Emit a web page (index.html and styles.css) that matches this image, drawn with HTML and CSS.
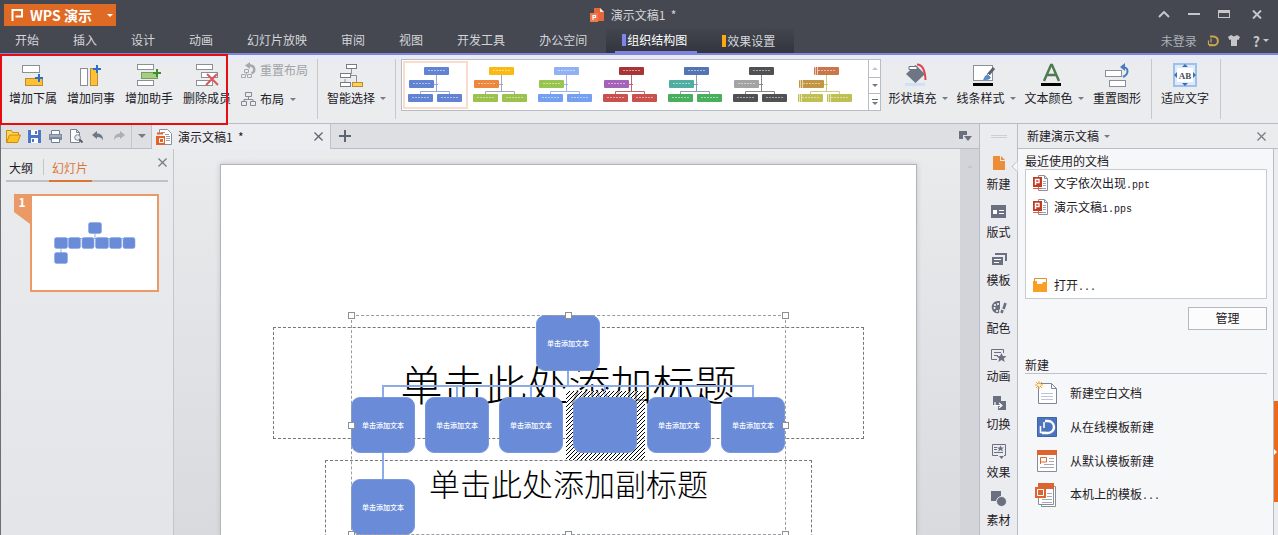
FILE: index.html
```html
<!DOCTYPE html>
<html lang="zh-CN">
<head>
<meta charset="utf-8">
<title>演示文稿1 - WPS 演示</title>
<link rel="stylesheet" href="styles.css">
</head>
<body>
<svg class="defs" aria-hidden="true">
  <symbol id="chart" viewBox="0 0 61 44">
    <path d="M31.500 12v17M29 21.500h4M15.500 31v-2.500h29V31" fill="none" stroke="var(--line)"/>
    <g stroke="none">
      <rect x="19" y="4" width="25" height="8" rx="1" fill="var(--a)"/>
      <rect x="4" y="17" width="25" height="8" rx="1" fill="var(--b)"/>
      <rect x="3" y="31" width="25" height="8" rx="1" fill="var(--c)"/>
      <rect x="32" y="31" width="25" height="8" rx="1" fill="var(--c)"/>
    </g>
    <path d="M23 7.500h17M8 20.500h17M7 34.500h17M36 34.500h17" stroke="#fff" stroke-opacity=".5" stroke-dasharray="2 1"/>
  </symbol>
  <symbol id="close" viewBox="0 0 10 10"><path d="M.5.5l9 9M9.500.5l-9 9" fill="none" stroke="currentColor" stroke-width="1.400"/></symbol>
  <symbol id="ppt" viewBox="0 0 17 16">
    <path d="M6.500.5h6l3 3v12h-9z" fill="#fff" stroke="#8a909c"/><path d="M12.500.5v3h3" fill="none" stroke="#8a909c"/>
    <path d="M11 6.500h3M11 8.500h3M11 10.500h3M9 13.500h5" stroke="#9aa3b5"/>
    <path d="M1 2h9v10H1z" fill="#c43a22"/><path d="M3.500 10V4.500h3.500v3H3.500" fill="none" stroke="#fff" stroke-width="1.400"/><path d="M1 13.500h9" stroke="#d8644c"/>
  </symbol>
</svg>

<header class="header">
  <div class="titlebar">
    <button class="app-button" type="button">
      <svg width="12" height="12" viewBox="0 0 12 12"><path d="M1.500 12V1H11v6.500H4.500" fill="none" stroke="#fff" stroke-width="2"/></svg>
      <span>WPS 演示</span><i class="arrow"></i>
    </button>
    <h1 class="doc-title">
      <svg width="15" height="14" viewBox="0 0 15 14"><path d="M4 0h6l4 4v9H4z" fill="#e8663c"/><path d="M10 0v4h4z" fill="#fbe3d8"/><path d="M0 5h8v9H0z" fill="#f0794d"/><path d="M3 12V7.500h2.500v2H3" fill="none" stroke="#fff" stroke-width="1.200"/></svg>
      演示文稿1&nbsp; *
    </h1>
    <div class="window-buttons">
      <button type="button" aria-label="收起"><svg width="12" height="7" viewBox="0 0 12 7"><path d="M1 6l5-5 5 5" fill="none" stroke="#c4c6ca" stroke-width="2"/></svg></button>
      <button type="button" aria-label="最小化"><svg width="12" height="7" viewBox="0 0 12 7"><path d="M0 3h12" stroke="#c4c6ca" stroke-width="2"/></svg></button>
      <button type="button" aria-label="最大化"><svg width="12" height="8" viewBox="0 0 12 8"><path d="M0 0h12v8H0zM1 3v4h10V3z" fill="#c4c6ca" fill-rule="evenodd"/></svg></button>
      <button type="button" aria-label="关闭"><svg width="10" height="9" viewBox="0 0 10 9"><path d="M1 .5l8 8M9 .5l-8 8" stroke="#c4c6ca" stroke-width="2"/></svg></button>
    </div>
  </div>
  <div class="menu-row">
    <nav class="tabs">
      <a href="#">开始</a><a href="#">插入</a><a href="#">设计</a><a href="#">动画</a><a href="#">幻灯片放映</a><a href="#">审阅</a><a href="#">视图</a><a href="#">开发工具</a><a href="#">办公空间</a>
    </nav>
    <nav class="context-tabs">
      <a class="active" href="#">组织结构图</a><a class="effects" href="#">效果设置</a>
    </nav>
    <div class="account">
      <a href="#">未登录</a>
      <svg width="12" height="12" viewBox="0 0 12 12"><path d="M3 1.500h3.500a4.300 4.300 0 0 1 0 8.800H2" fill="none" stroke="#c9a54f" stroke-width="2"/><path d="M4 3.500v4M1.500 5.500v4h4" fill="none" stroke="#c9a54f" stroke-width="1.200"/></svg>
      <svg width="12" height="11" viewBox="0 0 12 11"><path d="M3 0l3 1.500L9 0l3 2-1.500 3L9 4.500V11H3V4.500L1.500 5 0 2z" fill="#c4c6ca"/></svg>
      <button type="button" class="help">?<i class="arrow"></i></button>
    </div>
  </div>
</header>

<section class="ribbon">
  <div class="group members">
    <button type="button" class="tool"><svg width="26" height="26" viewBox="0 0 26 26"><rect x="2.500" y="3.500" width="17" height="7" fill="#fff" stroke="#8b8f96"/><rect x="5.500" y="16.500" width="17" height="7" fill="#ffc035" stroke="#b98c35"/><path d="M19 12v8M15 16h8" stroke="#2b6fc9" stroke-width="2"/></svg>增加下属</button>
    <button type="button" class="tool"><svg width="26" height="26" viewBox="0 0 26 26"><rect x="2.500" y="6.500" width="7" height="17" fill="#fff" stroke="#8b8f96"/><rect x="12.500" y="6.500" width="7" height="17" fill="#ffc035" stroke="#b98c35"/><path d="M19 3v8M15 7h8" stroke="#2b6fc9" stroke-width="2"/></svg>增加同事</button>
    <button type="button" class="tool"><svg width="26" height="26" viewBox="0 0 26 26"><rect x="1.500" y="2.500" width="16" height="5" fill="#fff" stroke="#8b8f96"/><rect x="5.500" y="10.500" width="16" height="6" fill="#a4d07d" stroke="#7c9a68"/><rect x="1.500" y="18.500" width="16" height="5" fill="#fff" stroke="#8b8f96"/><path d="M21 7v8M17 11h8" stroke="#3f8c2c" stroke-width="2"/></svg>增加助手</button>
    <button type="button" class="tool"><svg width="26" height="26" viewBox="0 0 26 26"><rect x="2.500" y="2.500" width="16" height="5" fill="#fff" stroke="#8b8f96"/><rect x="7.500" y="10.500" width="16" height="5" fill="#fff" stroke="#8b8f96"/><rect x="2.500" y="18.500" width="16" height="5" fill="#fff" stroke="#8b8f96"/><path d="M13 12l11 11M23 12L12 23" stroke="#dc5858" stroke-width="2"/></svg>删除成员</button>
  </div>
  <div class="group layout-tools">
    <button type="button" disabled><svg width="16" height="16" viewBox="0 0 16 16"><path d="M7 3.500h2.500a4 4 0 0 1 1 7.800" fill="none" stroke="#a6a8ad" stroke-width="2.400"/><path d="M4 3.500L9 0v7z" fill="#a6a8ad"/><path d="M3.500 7.500h4v3h-4zM.5 12.500h4v3h-4zM6.500 12.500h4v3h-4zM5.500 10.500v2" fill="#eee" stroke="#a6a8ad"/></svg>重置布局</button>
    <button type="button"><svg width="16" height="14" viewBox="0 0 16 14"><path d="M4.500.5h6v4h-6zM.5 9.500h5v4h-5zM9.500 9.500h5v4h-5zM7.500 4.500v3M3 9.500v-2h9v2" fill="none" stroke="#858991"/></svg>布局<i class="arrow"></i></button>
  </div>
  <div class="group smart">
    <button type="button" class="tool"><svg width="26" height="26" viewBox="0 0 26 26"><path d="M13.500 6v6M7 17v3M11 13.500h7.500V20" fill="none" stroke="#8b8f96"/><rect x="8.500" y="2.500" width="10" height="4" fill="#fff" stroke="#777b83"/><rect x="2.500" y="11.500" width="10" height="4" fill="#fff" stroke="#777b83"/><rect x="2.500" y="20.500" width="10" height="4" fill="#fff" stroke="#777b83"/><rect x="14.500" y="20.500" width="10" height="4" fill="#ffd05a" stroke="#b98c35"/></svg><span>智能选择<i class="arrow"></i></span></button>
  </div>
  <div class="gallery">
    <button type="button" class="style blue selected" aria-label="样式 1"><svg><use href="#chart"/></svg></button>
    <button type="button" class="style orange" aria-label="样式 2"><svg><use href="#chart"/></svg></button>
    <button type="button" class="style sky" aria-label="样式 3"><svg><use href="#chart"/></svg></button>
    <button type="button" class="style red" aria-label="样式 4"><svg><use href="#chart"/></svg></button>
    <button type="button" class="style teal" aria-label="样式 5"><svg><use href="#chart"/></svg></button>
    <button type="button" class="style dark" aria-label="样式 6"><svg><use href="#chart"/></svg></button>
    <button type="button" class="style olive" aria-label="样式 7"><svg viewBox="0 0 61 44"><use href="#chart"/><path d="M20.500 4v8M22.500 4v8M5.500 17v8M7.500 17v8M4.500 31v8M6.500 31v8M33.500 31v8M35.500 31v8" stroke="#fff" stroke-opacity=".6"/></svg></button>
    <div class="gallery-scroll">
      <button type="button" aria-label="上一行"><i class="arrow up"></i></button>
      <button type="button" aria-label="下一行"><i class="arrow"></i></button>
      <button type="button" class="more" aria-label="更多"><i class="arrow"></i></button>
    </div>
  </div>
  <div class="group format">
    <button type="button" class="tool"><svg width="26" height="26" viewBox="0 0 26 26"><path d="M3 12l9.500-9L22 12l-9.500 9z" fill="#6f7683"/><path d="M6 4.500h8v3H6z" fill="#fff" stroke="#687080"/><path d="M14 2.500c5 0 8 4 8.500 15.500" fill="none" stroke="#e2434f" stroke-width="2"/><path d="M2 22.500h20" stroke="#cfe0f7" stroke-width="3"/></svg><span>形状填充<i class="arrow"></i></span></button>
    <button type="button" class="tool"><svg width="26" height="26" viewBox="0 0 26 26"><rect x="2.500" y="3.500" width="19" height="15" fill="#fff" stroke="#8b8f96"/><path d="M23 6l-6 7" stroke="#596273" stroke-width="3"/><path d="M12 18l2-4 3-2 3 3c-1 3-4 3-8 3z" fill="#5c8bcb"/><path d="M17 12l3 3" stroke="#fff"/><path d="M2 22.500h20" stroke="#000" stroke-width="3"/></svg><span>线条样式<i class="arrow"></i></span></button>
    <button type="button" class="tool"><svg width="26" height="26" viewBox="0 0 26 26"><path d="M5 19L12 3h1l7 16M7.500 13h10" fill="none" stroke="#4f7a50" stroke-width="2.400"/><path d="M2 22.500h20" stroke="#000" stroke-width="3"/></svg><span>文本颜色<i class="arrow"></i></span></button>
    <button type="button" class="tool reset"><svg width="26" height="26" viewBox="0 0 26 26"><rect x="1.500" y="8.500" width="16" height="6" fill="#fff" stroke="#8b8f96"/><rect x="5.500" y="18.500" width="16" height="6" fill="#fff" stroke="#8b8f96"/><path d="M19 15c6-3 6-9 0-10" fill="none" stroke="#4a7dbd" stroke-width="2"/><path d="M16 5l5-4v8z" fill="#4a7dbd"/></svg>重置图形</button>
  </div>
  <div class="group fit">
    <button type="button" class="tool"><svg width="26" height="26" viewBox="0 0 26 26"><rect x="2" y="2" width="22" height="22" fill="#dfeafa" stroke="#9dc0ee" stroke-width="2"/><rect x="5" y="6" width="16" height="14" fill="#fff"/><path d="M10 5l3-3 3 3zM10 21l3 3 3-3zM5 10l-3 3 3 3zM21 10l3 3-3 3z" fill="#3c6fb4"/><text class="ab" x="13" y="17" text-anchor="middle">AB</text></svg>适应文字</button>
  </div>
  <div class="highlight"></div>
</section>

<div class="workspace">
  <main class="editor">
    <div class="docbar">
      <div class="quick">
        <button type="button" aria-label="打开"><svg width="15" height="13" viewBox="0 0 15 13"><path d="M.5 12V.5h5l1 2h6V5" fill="#ffd65c" stroke="#c98a12"/><path d="M.5 12.500L3.500 5h11l-3 7.500z" fill="#ffc21f" stroke="#c98a12"/></svg></button>
        <button type="button" aria-label="保存"><svg width="13" height="13" viewBox="0 0 13 13"><path d="M0 0h13v13H0z" fill="#4f77c7"/><path d="M3 0h7v5H3zM3 8h7v5H3z" fill="#fff"/><path d="M7 1h2v3H7zM4 9h2v3H4z" fill="#4f77c7"/></svg></button>
        <button type="button" aria-label="打印"><svg width="13" height="13" viewBox="0 0 13 13"><path d="M2.500.5h8v4h-8z" fill="#fff" stroke="#6e7c92"/><path d="M0 4h13v6H0z" fill="#7e8ca3"/><path d="M1 6h11" stroke="#c5ccd8"/><path d="M2.500 8.500h8v4h-8z" fill="#fff" stroke="#6e7c92"/></svg></button>
        <button type="button" aria-label="打印预览"><svg width="13" height="14" viewBox="0 0 13 14"><path d="M.5.5h6l3 3v10h-9zM6.500.5v3h3" fill="#fff" stroke="#7b828e"/><circle cx="7.500" cy="8.500" r="2.800" fill="#e4eaf2" stroke="#7b828e"/><path d="M9.500 10.500l3 3" stroke="#59606d" stroke-width="2"/></svg></button>
        <button type="button" aria-label="撤销"><svg width="12" height="10" viewBox="0 0 12 10"><path d="M0 4l5-4v2.500c4 0 6 2 6 7-1-3-3-3.500-6-3.500V8z" fill="#6d7787"/></svg></button>
        <button type="button" aria-label="恢复"><svg width="12" height="10" viewBox="0 0 12 10"><path d="M12 4L7 0v2.500c-4 0-6 2-6 7 1-3 3-3.500 6-3.500V8z" fill="#abafb6"/></svg></button>
      </div>
      <button type="button" class="quick-more" aria-label="自定义"><i class="arrow big"></i></button>
      <div class="doc-tab">
        <svg width="16" height="16" viewBox="0 0 16 16"><path d="M3.500 4V.5h8l4 4v11h-9" fill="#fff" stroke="#8a909c"/><path d="M9 5.500h4M10 7.500h4M10 9.500h4M10 11.500h4M5 3.500h4" stroke="#9aa0aa"/><path d="M0 7h9v9H0z" fill="#e1642a"/><path d="M3.500 9.500h4v4h-4z" fill="none" stroke="#fff"/><path d="M1 4.500h6" stroke="#e1642a" stroke-width="2"/></svg>
        <span>演示文稿1&nbsp; *</span>
        <button type="button" aria-label="关闭标签"><svg width="9" height="9"><use href="#close"/></svg></button>
      </div>
      <button type="button" class="add" aria-label="新建标签"><svg width="12" height="12" viewBox="0 0 12 12"><path d="M6 0v12M0 6h12" stroke="#5d6474" stroke-width="2"/></svg></button>
      <button type="button" class="windows" aria-label="窗口列表"><svg width="13" height="10" viewBox="0 0 13 10"><path d="M0 0h8v4H4v4H0z" fill="#6b7080"/><path d="M5 5h8l-4 5z" fill="#6b7080"/></svg></button>
    </div>

    <div class="stage">
      <aside class="outline">
        <div class="outline-tabs">
          <button type="button">大纲</button><i class="divider"></i><button type="button" class="active">幻灯片</button>
          <button type="button" class="close" aria-label="关闭窗格"><svg width="9" height="9"><use href="#close"/></svg></button>
        </div>
        <div class="thumb-row">
          <span class="number">1</span>
          <div class="thumb">
            <svg viewBox="0 0 125 94"><path d="M63 36v7M29 46v-3.500h68V46M29 53v5" fill="none" stroke="#8fb0ea"/><g fill="#6a8bd8" stroke="#88a7e6" stroke-width=".6"><rect x="56.500" y="26.500" width="13" height="11" rx="2"/><rect x="22.500" y="41.500" width="13" height="11" rx="2"/><rect x="36.500" y="41.500" width="12" height="11" rx="2"/><rect x="50" y="41.500" width="12" height="11" rx="2"/><rect x="63.500" y="41.500" width="13" height="11" rx="2"/><rect x="77.500" y="41.500" width="12" height="11" rx="2"/><rect x="91" y="41.500" width="12" height="11" rx="2"/><rect x="22.500" y="56.500" width="13" height="11" rx="2"/></g></svg>
          </div>
        </div>
      </aside>
      <div class="canvas">
        <div class="slide">
          <div class="placeholder title">单击此处添加标题</div>
          <div class="placeholder subtitle">单击此处添加副标题</div>
          <div class="org">
            <svg class="links" width="435" height="220" viewBox="0 0 435 220"><path d="M217 55v16M32 82V71h370v11M106 71v11M180 71v11M254 71v11M328 71v11M32 138v26" fill="none" stroke="#8cabe9" stroke-width="2"/></svg>
            <svg class="hatch" width="79" height="69"><defs><pattern id="stripes" width="4" height="4" patternUnits="userSpaceOnUse"><path d="M0 0h4v4H0z" fill="#fff" fill-opacity=".6"/><path d="M-1 1l2-2M0 4l4-4M3 5l2-2" stroke="#000" stroke-width="1"/></pattern></defs><path d="M0 0h79v69H0z" fill="url(#stripes)"/></svg>
            <div class="node root">单击添加文本</div>
            <div class="node c1">单击添加文本</div>
            <div class="node c2">单击添加文本</div>
            <div class="node c3">单击添加文本</div>
            <div class="node c4"></div>
            <div class="node c5">单击添加文本</div>
            <div class="node c6">单击添加文本</div>
            <div class="node leaf">单击添加文本</div>
            <div class="frame"></div>
            <i class="handle nw"></i><i class="handle n"></i><i class="handle ne"></i><i class="handle w"></i><i class="handle e"></i><i class="handle sw"></i><i class="handle s"></i><i class="handle se"></i>
          </div>
        </div>
        <div class="scrollbar"><i class="arrow up"></i></div>
      </div>
    </div>
  </main>

  <nav class="rail">
    <i class="grip"></i>
    <button type="button" class="current"><svg width="16" height="16" viewBox="0 0 16 16"><path d="M2 1h7v5h5v9H2z" fill="#ee8d37"/><path d="M10 1l4 4h-4z" fill="#ee8d37"/></svg>新建</button>
    <button type="button"><svg width="16" height="16" viewBox="0 0 16 16"><path d="M0 2h15v13H0z" fill="#6b7080"/><path d="M2 7h4v4H2zM8 7h5v1H8zM8 10h5v1H8z" fill="#fff"/></svg>版式</button>
    <button type="button"><svg width="16" height="16" viewBox="0 0 16 16"><path d="M4 3h11v7" fill="none" stroke="#6b7080" stroke-width="2"/><path d="M1 6h11v8H1z" fill="#6b7080"/><path d="M3 8.500h7M3 11.500h5" stroke="#fff"/></svg>模板</button>
    <button type="button"><svg width="16" height="16" viewBox="0 0 16 16"><path d="M6 2C2 3 0 6 1 10c1 4 5 5 7 4 1-1-1-3 1-4V2z" fill="#6b7080"/><g fill="#fff"><circle cx="4" cy="6" r="1"/><circle cx="7" cy="5" r="1"/><circle cx="3.500" cy="9" r="1"/><circle cx="6" cy="12" r="1"/></g><path d="M14.500 4l-2 6M11.500 11l-1 3" stroke="#6b7080" stroke-width="2.600"/></svg>配色</button>
    <button type="button"><svg width="16" height="16" viewBox="0 0 16 16"><path d="M6 12.500H.5v-10h12V6" fill="none" stroke="#6b7080"/><path d="M3 5.500h7M3 8.500h4" stroke="#6b7080"/><path d="M10.500 6l1.400 3 3.600.2-2.700 2.300 1 3.500-3.300-2-3.200 2 .9-3.500L5.500 9.200 9 9z" fill="#6b7080"/></svg>动画</button>
    <button type="button"><svg width="16" height="16" viewBox="0 0 16 16"><path d="M2 1h8v9H2zM7 6h8v9H7z" fill="#6b7080"/><path d="M4 7v3.500h6M8 8l3 2.500L8 13" fill="none" stroke="#fff" stroke-width="1.200"/></svg>切换</button>
    <button type="button"><svg width="16" height="16" viewBox="0 0 16 16"><path d="M7 12.500H1.500v-11h13v11H13" fill="none" stroke="#6b7080"/><path d="M3 4.500h3M3 6.500h3M3 9.500h9" stroke="#6b7080"/><path d="M9.500 2.500l1 2h2.500l-2 1.500 1 2.500-2.500-1.500L7 8.500 8 6 6 4.500h2.500zM8 13h5l-2.500 3z" fill="#6b7080"/></svg>效果</button>
    <button type="button"><svg width="16" height="16" viewBox="0 0 16 16"><path d="M0 0h10v10H0z" fill="#6b7080"/><circle cx="10.500" cy="10.500" r="5" fill="#6b7080" stroke="#ecedf0"/></svg>素材</button>
  </nav>

  <aside class="pane">
    <div class="pane-head"><button type="button">新建演示文稿<i class="arrow"></i></button><button type="button" class="close" aria-label="关闭"><svg width="9" height="9"><use href="#close"/></svg></button></div>
    <div class="pane-row">
      <div class="pane-body">
        <h2>最近使用的文档</h2>
        <div class="recent">
          <a href="#"><svg width="17" height="16"><use href="#ppt"/></svg><span>文字依次出现<b>.ppt</b></span></a>
          <a href="#"><svg width="17" height="16"><use href="#ppt"/></svg><span>演示文稿<b>1.pps</b></span></a>
          <a class="open" href="#"><svg width="17" height="16" viewBox="0 0 17 16"><path d="M2.500 7V1.500h12V7" fill="#fff" stroke="#e09024"/><path d="M1 4h4v3h5l1-2h4v10H1z" fill="#f99f26"/></svg><span>打开<b>...</b></span></a>
        </div>
        <button type="button" class="manage">管理</button>
        <h2 class="new">新建</h2>
        <ul class="new-list">
          <li><a href="#"><svg width="24" height="24" viewBox="0 0 24 24"><path d="M3.500 2.500h13l5 5v15h-18zM16.500 2.500v5h5" fill="#fff" stroke="#7c869a"/><path d="M6 12.500h12M6 15.500h12M6 18.500h12" stroke="#bcc5d8"/><path d="M4 0v8M0 4h8M1 1l6 6M7 1L1 7" stroke="#f2a12d"/><circle cx="4" cy="4" r="1.500" fill="#fff4c8"/></svg><span>新建空白文档</span></a></li>
          <li><a href="#"><svg width="24" height="24" viewBox="0 0 24 24"><path d="M2.500 2.500h19v19h-19z" fill="#4c73bd" stroke="#3f64ab"/><path d="M10 6h3a5.500 5.500 0 0 1 0 12H7" fill="none" stroke="#fff" stroke-width="2.400"/><path d="M9 7v6M5.500 11v6.500H11" fill="none" stroke="#fff" stroke-width="1.600"/></svg><span>从在线模板新建</span></a></li>
          <li><a href="#"><svg width="24" height="24" viewBox="0 0 24 24"><path d="M2.500 1.500h19v21h-19z" fill="#fff" stroke="#8a8e98"/><path d="M2 1h20v5H2z" fill="#dc6430"/><path d="M5.500 15V8.500h6V13h-6" fill="none" stroke="#dc6430"/><path d="M14 9.500h5M14 12.500h5M9 15.500h10M5 18.500h14" stroke="#a4a8b0"/></svg><span>从默认模板新建</span></a></li>
          <li><a href="#"><svg width="24" height="24" viewBox="0 0 24 24"><path d="M6.500 3.500h14v20h-14z" fill="#fff" stroke="#8a8e98"/><path d="M3.500 1.500h15v20h-15z" fill="#fff" stroke="#8a8e98"/><path d="M3 0h16v6H3z" fill="#dc6430"/><path d="M12 10.500h5M12 13.500h5M7 16.500h10M7 19.500h10" stroke="#a4a8b0"/><path d="M0 4h11v11H0z" fill="#dc6430"/><path d="M2.500 6.500h6v6h-6z" fill="none" stroke="#fff"/></svg><span>本机上的模板<b>...</b></span></a></li>
        </ul>
      </div>
      <div class="edge"><button type="button" aria-label="展开"><i></i></button></div>
    </div>
  </aside>
</div>
</body>
</html>
```

FILE: styles.css
```css
* { box-sizing: border-box; }
html, body { height: 100%; }
body {
  margin: 0;
  display: flex;
  flex-direction: column;
  overflow: hidden;
  font: 12px/16px "Noto Sans CJK SC", sans-serif;
  color: #1d2026;
  background: #eaecee;
}
button { font: inherit; color: inherit; background: none; border: 0; padding: 0; margin: 0; }
a { color: inherit; text-decoration: none; }
h1, h2, ul { margin: 0; padding: 0; font-size: 12px; font-weight: 400; list-style: none; }
svg { display: block; flex: none; }
b { font: 10px/16px "Liberation Mono", monospace; }
.defs { position: absolute; width: 0; height: 0; }

.arrow {
  display: inline-block;
  border: 3px solid transparent;
  border-top-color: #777b88;
  border-bottom: 0;
}
.arrow.up { border-top: 0; border-bottom: 3px solid #c4c6ca; }
.arrow.big { border-width: 4px 4px 0; }

/* header */
.header { flex: none; color: #d4d6d9; background: #454851; border-bottom: 2px solid #8184dc; }
.titlebar { display: grid; grid-template-columns: 1fr auto 1fr; align-items: center; height: 28px; padding-top: 2px; }
.app-button {
  justify-self: start;
  display: flex;
  align-items: center;
  gap: 7px;
  height: 22px;
  margin-left: 4px;
  padding: 0 3px 0 7px;
  color: #fff;
  font-weight: 700;
  background: #de6a24;
}
.app-button span { width: 70px; text-align: left; font-size: 14px; white-space: nowrap; }
.app-button .arrow { border-top-color: #fff; }
.doc-title { display: flex; align-items: center; gap: 6px; padding-right: 12px; line-height: 14px; }
.window-buttons { justify-self: end; display: flex; align-items: center; gap: 18px; padding: 0 16px 2px 0; }
.window-buttons button:last-child { margin-left: 4px; }
.menu-row { display: flex; height: 25px; line-height: 24px; }
.tabs { display: flex; gap: 34px; padding-left: 15px; }
.context-tabs {
  display: flex;
  gap: 18px;
  margin-left: 19px;
  padding: 0 9px;
  background: linear-gradient(#43464f, #32353d);
}
.context-tabs a { display: flex; align-items: center; gap: 1px; padding: 0 9px 0 7px; }
.context-tabs a::before { content: ""; width: 4px; height: 12px; background: #8083e8; }
.context-tabs .active { color: #fff; border-bottom: 2px solid #8184dc; padding-right: 10px; }
.context-tabs .effects { padding-right: 10px; }
.context-tabs .effects::before { background: #fba90f; }
.account { display: flex; align-items: center; gap: 13px; margin-left: auto; padding-right: 9px; color: #adb0b5; }
.account a { margin-right: -3px; }
.account svg + svg { margin-left: -4px; }
.help { display: flex; align-items: center; gap: 3px; font-size: 14px; font-weight: 700; color: #c4c6ca; }
.help .arrow { border-top-color: #c4c6ca; }

/* ribbon */
.ribbon {
  position: relative;
  flex: none;
  display: flex;
  height: 69px;
  padding-top: 4px;
  background: linear-gradient(#e8eaf8, #eaecee 12px);
  border-bottom: 1px solid #b9bcc3;
}
.group { display: flex; height: 60px; border-right: 1px solid #c6c8cd; }
.tool { display: flex; flex-direction: column; align-items: center; gap: 2px; height: 48px; padding-top: 3px; width: 58px; white-space: nowrap; }
.tool .arrow { margin: 0 0 3px 5px; }
.tool span { margin-right: -11px; }
.members { padding-left: 4px; border: 0; }
.layout-tools { flex-direction: column; gap: 13px; padding: 3px 9px 0 5px; }
.layout-tools button { display: flex; align-items: center; gap: 3px; height: 16px; }
.layout-tools button:disabled { color: #a0a3a8; }
.layout-tools .arrow { margin-left: 3px; }
.smart { padding: 0 15px 0 4px; }
.gallery {
  display: flex;
  align-items: flex-start;
  width: 480px;
  height: 52px;
  margin: 0 3px 0 5px;
  padding: 1px 0 0 1px;
  background: #fff;
  border: 1px solid #b9bcc6;
}
.style { width: 65px; height: 48px; border: 2px solid transparent; }
.style svg { width: 61px; height: 44px; }
.style.selected { border-color: #fadccd; }
.blue { --a: #6283d3; --b: #6283d3; --c: #6283d3; --line: #93a8de; }
.orange { --a: #fbb914; --b: #ec873b; --c: #9bc24d; --line: #a6a6bc; }
.sky { --a: #90b2f4; --b: #98c450; --c: #759ff0; --line: #9db7ec; }
.red { --a: #a93437; --b: #a462b8; --c: #ca504e; --line: #c4676a; }
.teal { --a: #5375b4; --b: #4fae9f; --c: #48b05c; --line: #8a9db5; }
.dark { --a: #505153; --b: #a3a3a3; --c: #505153; --line: #888; }
.olive { --a: #c9764d; --b: #c29543; --c: #bfc051; --line: #cccc80; }
.gallery-scroll { flex: none; align-self: stretch; display: grid; grid-template-rows: repeat(3, 1fr); width: 12px; margin: -1px 0 0 auto; border-left: 1px solid #b9bcc6; }
.gallery-scroll button { display: flex; flex-direction: column; align-items: center; justify-content: center; gap: 2px; }
.gallery-scroll button + button { border-top: 1px solid #b9bcc6; }
.gallery-scroll .more::before { content: ""; width: 6px; height: 1px; background: #666; }
.format { padding-right: 5px; }
.format .tool { width: 68px; }
.format .tool span { margin: 0; }
.format .tool svg { margin-right: 4px; }
.format .reset { width: 58px; }
.format .reset svg { margin: 0; }
.fit { padding: 0 6px 0 4px; }
.ab { font: 700 9px "Liberation Serif", serif; fill: #4b4f58; }
.highlight { position: absolute; left: 0; top: -1px; width: 228px; height: 71px; border: 2px solid #e60d12; pointer-events: none; z-index: 2; }

/* workspace */
.workspace { flex: 1; min-height: 0; display: flex; border-left: 1px solid #6b6e75; }
.editor { flex: 1; min-width: 0; display: flex; flex-direction: column; }
.docbar { flex: none; display: flex; align-items: stretch; height: 25px; background: #dedfe3; border-bottom: 1px solid #b9bcc3; }
.docbar button { display: flex; align-items: center; justify-content: center; }
.quick { display: flex; padding-left: 2px; width: 130px; }
.quick button { width: 21px; }
.quick-more { width: 20px; border-left: 1px solid #c4c6cb; }
.doc-tab { display: flex; align-items: center; gap: 6px; width: 180px; height: 25px; padding: 0 7px 0 4px; background: #ecedf0; border: 1px solid #c0c2c8; border-width: 0 1px; }
.doc-tab button { margin-left: auto; color: #5d6474; }
.add { width: 27px; }
.windows { margin-left: auto; width: 27px; }
.stage { flex: 1; min-height: 0; display: flex; }
.outline { flex: none; width: 173px; padding: 7px 5px 0; border-right: 1px solid #c4c6cb; background: linear-gradient(#eaebed, #e4e5e8); }
.outline-tabs { display: flex; align-items: stretch; height: 26px; border-bottom: 2px solid #bfc1c6; }
.outline-tabs button { height: 26px; padding: 0 3px 2px; line-height: 22px; }
.outline-tabs .active { padding: 0 4px 0 3px; color: #dc7537; border-bottom: 2px solid #dc7537; }
.outline-tabs .divider { width: 1px; height: 16px; margin: 3px 5px 0 7px; background: #c4c6cb; }
.outline-tabs .close { margin-left: auto; padding: 2px 1px 0; height: 11px; }
.close { color: #777b83; }
.thumb-row { display: flex; margin-top: 12px; padding: 0 9px 0 8px; }
.number { width: 16px; height: 30px; color: #fff; font-weight: 700; text-align: center; background: #eb9a67; clip-path: polygon(0 0, 100% 0, 100% 100%, 0 60%); }
.thumb { flex: 1; border: 2px solid #eb9a67; background: #fff; }
.thumb svg { width: 100%; }
.canvas { flex: 1; min-width: 0; display: flex; background: linear-gradient(#eaebed, #d9dadd); }
.slide { position: relative; flex: 1; margin: 15px 43px 0 46px; background: #fff; border: 1px solid #b2b4b9; border-bottom: 0; box-shadow: 0 0 5px #c4c5c9; overflow: hidden; }
.scrollbar { width: 19px; padding-top: 6px; text-align: center; background: #d3d4d9; }
.placeholder { position: absolute; display: flex; justify-content: center; align-items: center; border: 1px dashed #777; color: #000; font-weight: 300; white-space: nowrap; }
.title { left: 52px; top: 162px; width: 591px; height: 112px; font-size: 42px; }
.subtitle { left: 104px; top: 295px; width: 487px; height: 112px; padding-bottom: 66px; font-size: 31px; }
.org { position: absolute; left: 130px; top: 150px; width: 435px; height: 220px; }
.links { position: absolute; left: 0; top: 0; }
.frame { position: absolute; inset: 0; border: 1px dashed #999ca1; }
.hatch { position: absolute; left: 215px; top: 76px; }
.node { position: absolute; top: 82px; width: 64px; height: 56px; display: flex; align-items: center; justify-content: center; border-radius: 9px; background: #698bd8; border: 1px solid #7898df; color: #fff; font-size: 7px; font-weight: 500; white-space: nowrap; }
.root { left: 185px; top: 0; }
.c1 { left: 0; }
.c2 { left: 74px; }
.c3 { left: 148px; }
.c4 { left: 222px; }
.c5 { left: 296px; }
.c6 { left: 370px; }
.leaf { left: 0; top: 164px; }
.handle { position: absolute; width: 7px; height: 7px; margin: -3px; background: #fff; border: 1px solid #8c8f94; }
.nw { left: 0; top: 0; }
.n { left: 217px; top: 0; }
.ne { left: 434px; top: 0; }
.w { left: 0; top: 110px; }
.e { left: 434px; top: 110px; }
.sw { left: 0; top: 219px; }
.s { left: 217px; top: 219px; }
.se { left: 434px; top: 219px; }

/* side rail */
.rail { flex: none; display: flex; flex-direction: column; align-items: stretch; width: 38px; background: #ebecef; border-left: 1px solid #b9bcc3; }
.grip { flex: none; width: 16px; height: 3px; margin: 11px auto 16px; border: 1px solid #ccced2; border-width: 1px 0; }
.rail button { position: relative; flex: none; display: flex; flex-direction: column; align-items: center; gap: 5px; height: 48px; padding-top: 1px; }
.rail .current::after { content: ""; position: absolute; right: -5px; top: 8px; width: 8px; height: 8px; background: #f6f7f8; border: 1px solid #b9bcc3; border-width: 0 0 1px 1px; transform: rotate(45deg); z-index: 1; clip-path: polygon(0 0, 100% 100%, 0 100%); }

/* task pane */
.pane { flex: none; display: flex; flex-direction: column; width: 261px; border-left: 1px solid #b9bcc3; }
.pane-head { flex: none; display: flex; justify-content: space-between; align-items: center; height: 25px; padding: 0 12px 0 9px; border-bottom: 1px solid #b9bcc3; }
.pane-head .arrow { margin: 0 0 3px 5px; }
.pane-row { flex: 1; min-height: 0; display: flex; }
.pane-body { flex: 1; min-width: 0; padding: 4px 6px 0 7px; background: #f6f7f8; border-right: 1px solid #b9bcc3; }
.recent { display: flex; flex-direction: column; gap: 8px; height: 130px; padding: 5px 6px; background: #fff; border: 1px solid #c8cacf; }
.recent a { display: flex; gap: 5px; height: 16px; }
.recent .open { margin-top: auto; }
.manage { display: block; width: 79px; height: 23px; margin: 8px 0 0 auto; padding-bottom: 2px; background: #fcfcfd; border: 1px solid #b5b8bf; }
.new { margin-top: 27px; border-bottom: 1px solid #bfc1c6; }
.new-list { display: grid; gap: 10px; padding: 7px 0 0 10px; }
.new-list a { display: flex; align-items: center; gap: 11px; height: 24px; }
.edge { width: 4px; padding-top: 252px; }
.edge button { display: flex; align-items: center; width: 4px; height: 101px; background: #ea6b20; }
.edge i { border: 3px solid transparent; border-left-color: #fff; border-right: 0; }
```
